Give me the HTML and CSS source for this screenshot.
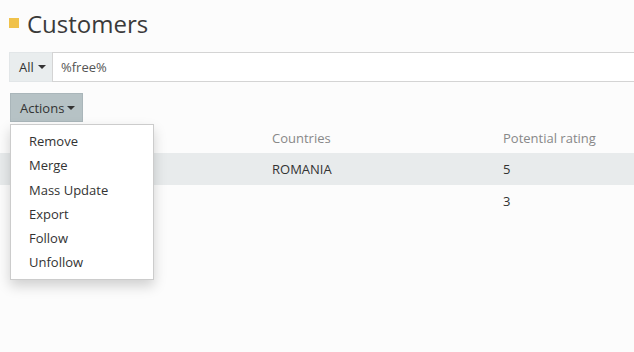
FILE: index.html
```html
<!DOCTYPE html>
<html lang="en">
<head>
    <meta charset="UTF-8">
    <title>Customers</title>
    <link rel="stylesheet" href="styles.css">
</head>
<body>
    <div class="page-header">
        <span class="title-mark"></span>
        <h1 class="page-title">Customers</h1>
    </div>

    <div class="search-bar">
        <button class="search-scope">All <span class="caret"></span></button>
        <input type="text" class="search-input" value="%free%">
    </div>

    <div class="toolbar">
        <div class="dropdown">
            <button class="btn-actions">Actions <span class="caret"></span></button>
            <ul class="dropdown-menu">
                <li><a href="#">Remove</a></li>
                <li><a href="#">Merge</a></li>
                <li><a href="#">Mass Update</a></li>
                <li><a href="#">Export</a></li>
                <li><a href="#">Follow</a></li>
                <li><a href="#">Unfollow</a></li>
            </ul>
        </div>
    </div>

    <table class="grid">
        <thead>
            <tr>
                <th class="col-name"></th>
                <th class="col-country">Countries</th>
                <th>Potential rating</th>
            </tr>
        </thead>
        <tbody>
            <tr class="row-selected">
                <td></td>
                <td>ROMANIA</td>
                <td>5</td>
            </tr>
            <tr>
                <td></td>
                <td></td>
                <td>3</td>
            </tr>
        </tbody>
    </table>
</body>
</html>
```

FILE: styles.css
```css
body {
    margin: 0;
    min-height: 100vh;
    background-color: #fcfcfc;
    font-family: "Open Sans", "Liberation Sans", sans-serif;
    font-size: 13px;
    color: #333333;
}

.page-header {
    display: flex;
    align-items: center;
    height: 46px;
    padding: 0 9px;
}

.title-mark {
    width: 10px;
    height: 10px;
    background-color: #f0c24b;
    margin-right: 8px;
}

.page-title {
    margin: 0;
    font-size: 24px;
    font-weight: normal;
    color: #3a3a3a;
}

.search-bar {
    display: flex;
    margin: 6px 0 0 9px;
    height: 30px;
}

.search-scope {
    display: flex;
    align-items: center;
    gap: 4px;
    width: 43px;
    padding: 0 0 0 9px;
    border: 1px solid #e2e6e8;
    border-right: none;
    background-color: #e9edee;
    font-family: inherit;
    font-size: 13px;
    color: #333333;
}

.search-input {
    flex: 1;
    border: 1px solid #d4d4d4;
    border-right: none;
    background-color: #ffffff;
    padding: 0 0 0 8px;
    font-family: inherit;
    font-size: 13px;
    color: #555555;
    outline: none;
}

.caret {
    display: inline-block;
    width: 0;
    height: 0;
    border-top: 4px solid #333333;
    border-left: 4px solid transparent;
    border-right: 4px solid transparent;
}

.toolbar {
    padding: 11px 0 0 10px;
    height: 29px;
}

.dropdown {
    position: relative;
    display: inline-block;
}

.btn-actions {
    display: flex;
    align-items: center;
    gap: 3px;
    height: 29px;
    padding: 0 7px 0 9px;
    border: 1px solid #aab6ba;
    background-color: #b6c2c5;
    font-family: inherit;
    font-size: 13px;
    color: #333333;
}

.dropdown-menu {
    position: absolute;
    top: 31px;
    left: 0;
    z-index: 10;
    width: 142px;
    margin: 0;
    padding: 4px 0;
    list-style: none;
    background-color: #ffffff;
    border: 1px solid #cccccc;
    box-shadow: 0 6px 12px rgba(0, 0, 0, 0.175);
}

.dropdown-menu a {
    display: block;
    padding: 3px 18px;
    line-height: 18.3px;
    color: #333333;
    text-decoration: none;
}

.grid {
    width: 100%;
    border-collapse: collapse;
}

.grid th {
    text-align: left;
    font-weight: normal;
    color: #888888;
    height: 31px;
    padding: 0 8px;
}

.grid td {
    height: 32px;
    padding: 0 8px;
}

.col-name {
    width: 248px;
}

.col-country {
    width: 215px;
}

.row-selected {
    background-color: #e8ebec;
}
```
